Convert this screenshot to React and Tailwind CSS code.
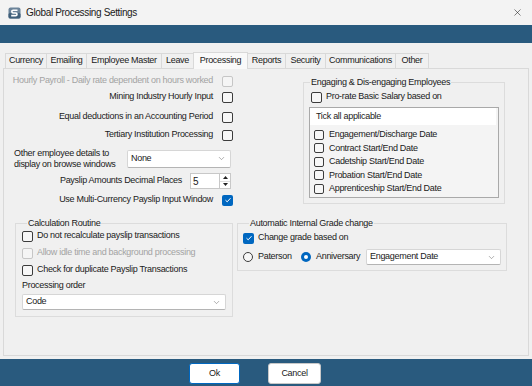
import React from 'react';
import { ChevronDown, X } from 'lucide-react';

const tabs = [
    { name: 'Currency', w: 'w-[42px]' },
    { name: 'Emailing', w: 'w-[41px]' },
    { name: 'Employee Master', w: 'w-[76px]' },
    { name: 'Leave', w: 'w-[33px]' },
    { name: 'Processing', w: 'w-[55px]', active: true },
    { name: 'Reports', w: 'w-[39px]' },
    { name: 'Security', w: 'w-[41px]' },
    { name: 'Communications', w: 'w-[71px]' },
    { name: 'Other', w: 'w-[34px]' },
];

const dateOptions = [
    'Engagement/Discharge Date',
    'Contract Start/End Date',
    'Cadetship Start/End Date',
    'Probation Start/End Date',
    'Apprenticeship Start/End Date',
];

function Check({ checked, disabled, small }) {
    const size = small ? 'w-[10px] h-[10px]' : 'w-[11px] h-[11px]';
    if (checked) {
        return (
            <span className={`${size} shrink-0 rounded-[2px] bg-[#0067c0] flex items-center justify-center`}>
                <svg width="8" height="8" viewBox="0 0 8 8">
                    <polyline points="1.5,4.2 3.2,5.8 6.5,2.2" fill="none" stroke="white" strokeWidth="1" />
                </svg>
            </span>
        );
    }
    return (
        <span
            className={`${size} shrink-0 rounded-[2px] border ${disabled ? 'border-[#c6c6c6] bg-[#f5f5f5]' : 'border-[#3c3c3c] bg-[#f7f7f7]'}`}
        />
    );
}

function Radio({ checked }) {
    if (checked) {
        return (
            <span className="w-[10px] h-[10px] shrink-0 rounded-full bg-[#0067c0] flex items-center justify-center">
                <span className="w-[4px] h-[4px] rounded-full bg-white" />
            </span>
        );
    }
    return <span className="w-[10px] h-[10px] shrink-0 rounded-full border border-[#3c3c3c] bg-[#f7f7f7]" />;
}

function Select({ value, className }) {
    return (
        <div className={`flex items-center justify-between bg-white border border-[#d6d6d6] border-b-[#b4b4b4] rounded-[2px] pl-[3px] pr-[4px] ${className}`}>
            <span>{value}</span>
            <ChevronDown size={9} strokeWidth={1.4} className="text-[#6a6a6a]" />
        </div>
    );
}

function RightRow({ label, checked, disabled, className = '' }) {
    return (
        <div className={`h-[16px] flex items-center justify-end gap-[9px] ${className}`}>
            <span className={disabled ? 'text-[#a3a3a3]' : ''}>{label}</span>
            <Check checked={checked} disabled={disabled} />
        </div>
    );
}

export default function App() {
    return (
        <div className="w-[532px] h-[386px] flex flex-col overflow-hidden bg-[#f0f0f0] text-[#1a1a1a] text-[9px] tracking-[-0.3px] font-['Liberation_Sans',Arial,sans-serif]">
            {/* Title bar */}
            <div className="h-[25px] shrink-0 bg-[#f3f3f3] flex items-center pl-[8px] pr-[8px]">
                <svg width="13" height="12" viewBox="0 0 13 12">
                    <rect x="0.5" y="0.5" width="12" height="11" rx="2" fill="#6b8399" />
                    <rect x="0.5" y="6" width="12" height="5.5" rx="1.5" fill="#3f5f7a" />
                    <path d="M3 4.2 Q3 2.4 5.2 2.4 L9.5 2.4 L9.5 4 L5.3 4 Q4.6 4 4.6 4.6 Q4.6 5.3 5.3 5.3 L8 5.3 Q9.8 5.3 9.8 7.2 Q9.8 9.4 7.6 9.4 L3.2 9.4 L3.2 7.8 L7.5 7.8 Q8.2 7.8 8.2 7.2 Q8.2 6.7 7.5 6.7 L5 6.7 Q3 6.7 3 4.2 Z" fill="white" />
                </svg>
                <span className="ml-[5px] text-[10px] tracking-[-0.35px]">Global Processing Settings</span>
                <X size={11} strokeWidth={1.2} className="ml-auto mr-[1px]" />
            </div>

            {/* Header band */}
            <div className="h-[18px] shrink-0 bg-[#295a7e]" />

            {/* Tabs */}
            <div className="h-[25px] shrink-0 flex items-end pl-[5px]">
                {tabs.map((t, i) => (
                    <div
                        key={t.name}
                        className={`${t.w} ${i > 0 ? '-ml-px' : ''} flex items-center justify-center border border-b-0 border-[#d9d9d9] ${
                            t.active ? 'h-[17px] bg-[#f9f9f9] relative z-10 -mb-px pb-[1px]' : 'h-[15px] bg-[#f0f0f0]'
                        }`}
                    >
                        {t.name}
                    </div>
                ))}
            </div>

            {/* Tab panel */}
            <div className="h-[288px] shrink-0 mx-[3px] border border-[#d9d9d9] bg-[#f0f0f0]">
                <div className="flex items-start">
                    {/* Left options */}
                    <div className="w-[232px] pt-[4px] pr-[3px]">
                        <RightRow label="Hourly Payroll - Daily rate dependent on hours worked" disabled />
                        <RightRow label="Mining Industry Hourly Input" />
                        <RightRow label="Equal deductions in an Accounting Period" className="mt-[4px]" />
                        <RightRow label="Tertiary Institution Processing" className="mt-[2px]" />
                        <div className="mt-[5px] h-[21px] flex items-center pl-[10px] pr-[2px]">
                            <div className="leading-[11px] w-[113px]">
                                Other employee details to
                                <br />
                                display on browse windows
                            </div>
                            <Select value="None" className="ml-auto w-[104px] h-[18px]" />
                        </div>
                        <div className="mt-[4px] h-[16px] flex items-center justify-end pr-[2px]">
                            <span>Payslip Amounts Decimal Places</span>
                            <div className="ml-[8px] w-[41px] h-[16px] bg-white border border-[#c8c8c8] flex">
                                <span className="flex-1 pl-[2px] flex items-center text-[10px]">5</span>
                                <div className="w-[11px] border-l border-[#c8c8c8] flex flex-col">
                                    <div className="flex-1 flex items-center justify-center border-b border-[#dedede]">
                                        <svg width="5" height="3" viewBox="0 0 5 3">
                                            <polygon points="0,3 2.5,0 5,3" fill="#222" />
                                        </svg>
                                    </div>
                                    <div className="flex-1 flex items-center justify-center">
                                        <svg width="5" height="3" viewBox="0 0 5 3">
                                            <polygon points="0,0 2.5,3 5,0" fill="#222" />
                                        </svg>
                                    </div>
                                </div>
                            </div>
                        </div>
                        <RightRow label="Use Multi-Currency Payslip Input Window" checked className="mt-[3px]" />
                    </div>

                    {/* Engaging group */}
                    <fieldset className="ml-[67px] mt-[8px] w-[202px] border border-[#dcdcdc] pl-[7px] pr-[5px] pb-[5px]">
                        <legend className="ml-[-1px] px-[1px] leading-[11px]">Engaging &amp; Dis-engaging Employees</legend>
                        <div className="mt-[2px] h-[14px] flex items-center gap-[4px]">
                            <Check />
                            <span>Pro-rate Basic Salary based on</span>
                        </div>
                        <div className="mt-[3px] ml-[-2px] h-[91px] border border-[#a9a9a9] bg-[#f4f4f4]">
                            <div className="h-[17px] mr-[2px] bg-white flex items-center pl-[6px]">Tick all applicable</div>
                            <div className="pt-[3px] pl-[4px]">
                                {dateOptions.map(o => (
                                    <div key={o} className="h-[13.5px] flex items-center gap-[5px]">
                                        <Check small />
                                        <span>{o}</span>
                                    </div>
                                ))}
                            </div>
                        </div>
                    </fieldset>
                </div>

                <div className="mt-[10px] flex items-start">
                    {/* Calculation Routine */}
                    <fieldset className="ml-[11px] w-[218px] h-[99px] border border-[#dcdcdc] pl-[6px]">
                        <legend className="ml-[5px] px-[1px] leading-[11px]">Calculation Routine</legend>
                        <div className="h-[14px] flex items-center gap-[4px]">
                            <Check />
                            <span>Do not recalculate payslip transactions</span>
                        </div>
                        <div className="mt-[3px] h-[14px] flex items-center gap-[4px]">
                            <Check disabled />
                            <span className="text-[#a3a3a3]">Allow idle time and background processing</span>
                        </div>
                        <div className="mt-[3px] h-[14px] flex items-center gap-[4px]">
                            <Check />
                            <span>Check for duplicate Payslip Transactions</span>
                        </div>
                        <div className="mt-[2px] h-[14px] flex items-center">Processing order</div>
                        <Select value="Code" className="mt-[1px] w-[204px] h-[16px]" />
                    </fieldset>

                    {/* Automatic Internal Grade change */}
                    <fieldset className="ml-[4px] w-[270px] h-[53px] border border-[#dcdcdc] pl-[5px]">
                        <legend className="ml-[6px] px-[1px] leading-[11px]">Automatic Internal Grade change</legend>
                        <div className="mt-[2px] h-[14px] flex items-center gap-[4px]">
                            <Check checked />
                            <span>Change grade based on</span>
                        </div>
                        <div className="mt-[4px] h-[16px] flex items-center">
                            <div className="w-[58px] flex items-center gap-[5px]">
                                <Radio />
                                <span>Paterson</span>
                            </div>
                            <div className="w-[65px] flex items-center gap-[5px]">
                                <Radio checked />
                                <span>Anniversary</span>
                            </div>
                            <Select value="Engagement Date" className="w-[135px] h-[16px]" />
                        </div>
                    </fieldset>
                </div>
            </div>

            <div className="h-[3px] shrink-0" />

            {/* Footer */}
            <div className="flex-1 bg-[#295a7e] flex items-start pt-[4px] pl-[189px] gap-[28px]">
                <button className="w-[51px] h-[21px] bg-white border border-[#0067c0] rounded-[3px]">Ok</button>
                <button className="w-[53px] h-[21px] bg-white border border-[#c8c8c8] rounded-[3px]">Cancel</button>
            </div>
        </div>
    );
}
